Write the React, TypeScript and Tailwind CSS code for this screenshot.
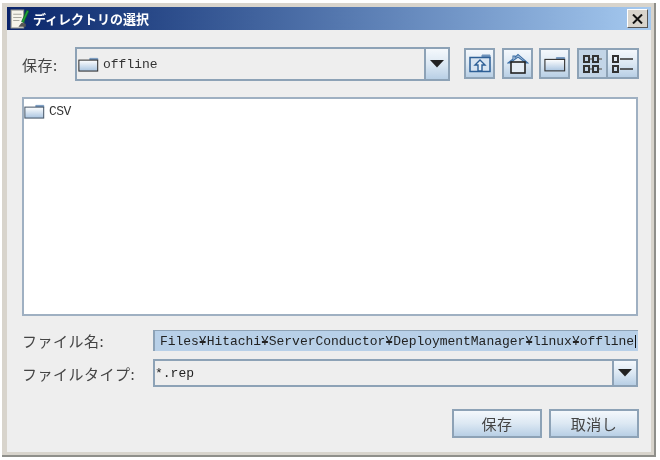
const jp = "font-['Noto_Sans_CJK_JP',sans-serif]";
const mono = "font-['Liberation_Mono','Noto_Sans_CJK_JP',monospace]";
const grad = "bg-gradient-to-b from-[#f4f8fc] via-[#dce8f3] to-[#b8cfe5]";

function Folder({ w = 21, h = 15, dark = false }: { w?: number; h?: number; dark?: boolean }) {
  return (
    <svg width={w} height={h} viewBox="0 0 24 17" className="shrink-0">
      <defs>
        <linearGradient id="fg" x1="0" y1="0" x2="0" y2="1">
          <stop offset="0" stopColor="#ffffff" />
          <stop offset="1" stopColor="#a9c4e0" />
        </linearGradient>
      </defs>
      <path d="M13.5 3.5 V1.5 H22.5 V4" fill="#6f93bb" stroke="#6f93bb" />
      <rect x="1" y="3.5" width="21.5" height="12.5" fill="url(#fg)" stroke={dark ? "#333" : "#4a5a6c"} strokeWidth="1.2" />
    </svg>
  );
}

function ToolBtn({ children, pressed, className = "" }: { children: React.ReactNode; pressed?: boolean; className?: string }) {
  return (
    <div
      className={`w-[31px] h-[31px] flex items-center justify-center border-2 border-[#8da2b6] ${
        pressed ? "bg-[#c3d5e7]" : grad
      } ${className}`}
    >
      {children}
    </div>
  );
}

function Arrow() {
  return (
    <svg width="14" height="8" viewBox="0 0 14 8">
      <path d="M0 0 H14 L7 7.5 Z" fill="#222" />
    </svg>
  );
}

function Label({ children, className = "" }: { children: React.ReactNode; className?: string }) {
  return <span className={`${jp} text-[15px] tracking-[0.5px] leading-none text-[#444] ${className}`}>{children}</span>;
}

export default function App() {
  return (
    <div className="w-[660px] h-[460px] bg-white pt-[3px] pl-[2px] pr-[4px] pb-[3px] blur-[0.3px]">
      <div className="w-full h-full bg-[#d8d4cc] border-r-2 border-b-2 border-[#8f8f8a] pt-[4px] pl-[5px] pr-[3px] pb-[3px] flex flex-col">
        {/* title bar */}
        <div className="h-[23px] shrink-0 flex items-center bg-gradient-to-r from-[#0a246a] to-[#a6caf0] pl-[2px] pr-[3px]">
          <svg width="22" height="22" viewBox="0 0 21 21" className="shrink-0">
            <path d="M2 2 H14 V19 H2 Z" fill="#f5f3ea" stroke="#9a9a90" />
            <path d="M4 6 H12 M4 9 H12 M4 12 H10" stroke="#a8a8a0" />
            <path d="M17 2 L12 13 L14 14 L19 3 Z" fill="#1fa33a" stroke="#0d5a1c" strokeWidth="0.6" />
            <path d="M12 14 L9 18 H16 V15 Z" fill="#555" />
          </svg>
          <span className={`${jp} ml-[2px] text-white text-[13px] font-bold leading-none`}>ディレクトリの選択</span>
          <div className="ml-auto w-[21px] h-[19px] bg-[#d8d4cc] border border-t-white border-l-white border-r-[#555] border-b-[#555] flex items-center justify-center">
            <svg width="11" height="10" viewBox="0 0 11 10">
              <path d="M1 0.5 L10 9.5 M10 0.5 L1 9.5" stroke="#111" strokeWidth="2" />
            </svg>
          </div>
        </div>

        {/* content */}
        <div className="flex-1 bg-[#eeeeee] pl-[15px] pr-[13px] pt-[17px] flex flex-col">
          {/* top row */}
          <div className="flex items-start">
            <Label className="w-[53px] shrink-0 mt-[10px]">保存:</Label>
            <div className="w-[375px] h-[34px] shrink-0 flex border-2 border-[#8da2b6] bg-[#eeeeee]">
              <div className="flex-1 flex items-center pl-[1px] gap-[4px]">
                <Folder dark />
                <span className={`${mono} text-[13px] text-[#333] leading-none`}>offline</span>
              </div>
              <div className={`w-[24px] flex items-center justify-center border-l-2 border-[#8da2b6] ${grad}`}>
                <Arrow />
              </div>
            </div>
            <div className="flex ml-[14px] mt-[1px]">
              <ToolBtn>
                <svg width="22" height="19" viewBox="0 0 22 19">
                  <path d="M13 3 V1 H21 V4" fill="#6f93bb" stroke="#6f93bb" />
                  <rect x="1" y="3.5" width="20" height="14" fill="#d7e4f1" stroke="#2d5f96" strokeWidth="1.5" />
                  <path d="M11 6 L16 11 H13 V17 H9 V11 H6 Z" fill="#e8f0f8" stroke="#2d5f96" strokeWidth="1.4" />
                </svg>
              </ToolBtn>
              <ToolBtn className="ml-[7px]">
                <svg width="22" height="22" viewBox="0 0 22 22">
                  <path d="M1 10 L6 6 V3 H8 V4.5 L11 1.5 L21 10 H19 L11 4 L3 10 Z" fill="#dfe9f4" stroke="#3b6ea5" strokeWidth="1.1" />
                  <rect x="4" y="9" width="14" height="11" fill="#e4edf6" stroke="#222" strokeWidth="1.6" />
                </svg>
              </ToolBtn>
              <ToolBtn className="ml-[6px]">
                <Folder w={22} h={16} dark />
              </ToolBtn>
              <ToolBtn pressed className="ml-[7px]">
                <svg width="22" height="18" viewBox="0 0 22 18" fill="none" stroke="#333" strokeWidth="2">
                  <rect x="2" y="1" width="5" height="6" />
                  <rect x="11" y="1" width="5" height="6" />
                  <rect x="2" y="11" width="5" height="6" />
                  <rect x="11" y="11" width="5" height="6" />
                  <path d="M8 4 H10 M17 4 H20 M8 14 H10 M17 14 H20" stroke="#777" strokeWidth="1.5" />
                </svg>
              </ToolBtn>
              <ToolBtn className="ml-[-2px] w-[33px]">
                <svg width="24" height="18" viewBox="0 0 24 18" fill="none" stroke="#333" strokeWidth="2">
                  <rect x="2" y="1" width="5" height="6" />
                  <rect x="2" y="11" width="5" height="6" />
                  <path d="M9 4 H22 M9 14 H22" strokeWidth="1.6" />
                </svg>
              </ToolBtn>
            </div>
          </div>

          {/* list */}
          <div className="mt-[16px] w-[616px] h-[219px] shrink-0 bg-white border-2 border-[#9fb0c2] pt-[5px] pl-[0px] flex items-start gap-[4px]">
            <Folder />
            <span className={`${mono} text-[13px] tracking-[-0.5px] leading-[15px] text-[#333]`}>CSV</span>
          </div>

          {/* file name */}
          <div className="mt-[14px] flex items-center">
            <Label className="w-[131px] shrink-0">ファイル名:</Label>
            <div className="w-[485px] h-[21px] shrink-0 border-l-2 border-t border-[#8da2b6] bg-[#b8d0e8] flex items-center pl-[5px] overflow-hidden">
              <span className={`${mono} text-[13px] tracking-[-0.03px] leading-none text-[#222] whitespace-nowrap border-r border-[#111] pr-[1px]`}>
                Files¥Hitachi¥ServerConductor¥DeploymentManager¥linux¥offline
              </span>
            </div>
          </div>

          {/* file type */}
          <div className="mt-[8px] flex items-center">
            <Label className="w-[131px] shrink-0">ファイルタイプ:</Label>
            <div className="w-[485px] h-[28px] shrink-0 flex border-2 border-[#8da2b6]">
              <div className="flex-1 flex items-center">
                <span className={`${mono} text-[13px] leading-none text-[#222]`}>*.rep</span>
              </div>
              <div className={`w-[24px] flex items-center justify-center border-l-2 border-[#8da2b6] ${grad}`}>
                <Arrow />
              </div>
            </div>
          </div>

          {/* buttons */}
          <div className="mt-[22px] flex justify-end gap-[7px] -mr-[1px]">
            {["保存", "取消し"].map((t) => (
              <div key={t} className={`w-[90px] h-[29px] border-2 border-[#8da2b6] flex items-center justify-center ${grad}`}>
                <Label>{t}</Label>
              </div>
            ))}
          </div>
        </div>
      </div>
    </div>
  );
}
